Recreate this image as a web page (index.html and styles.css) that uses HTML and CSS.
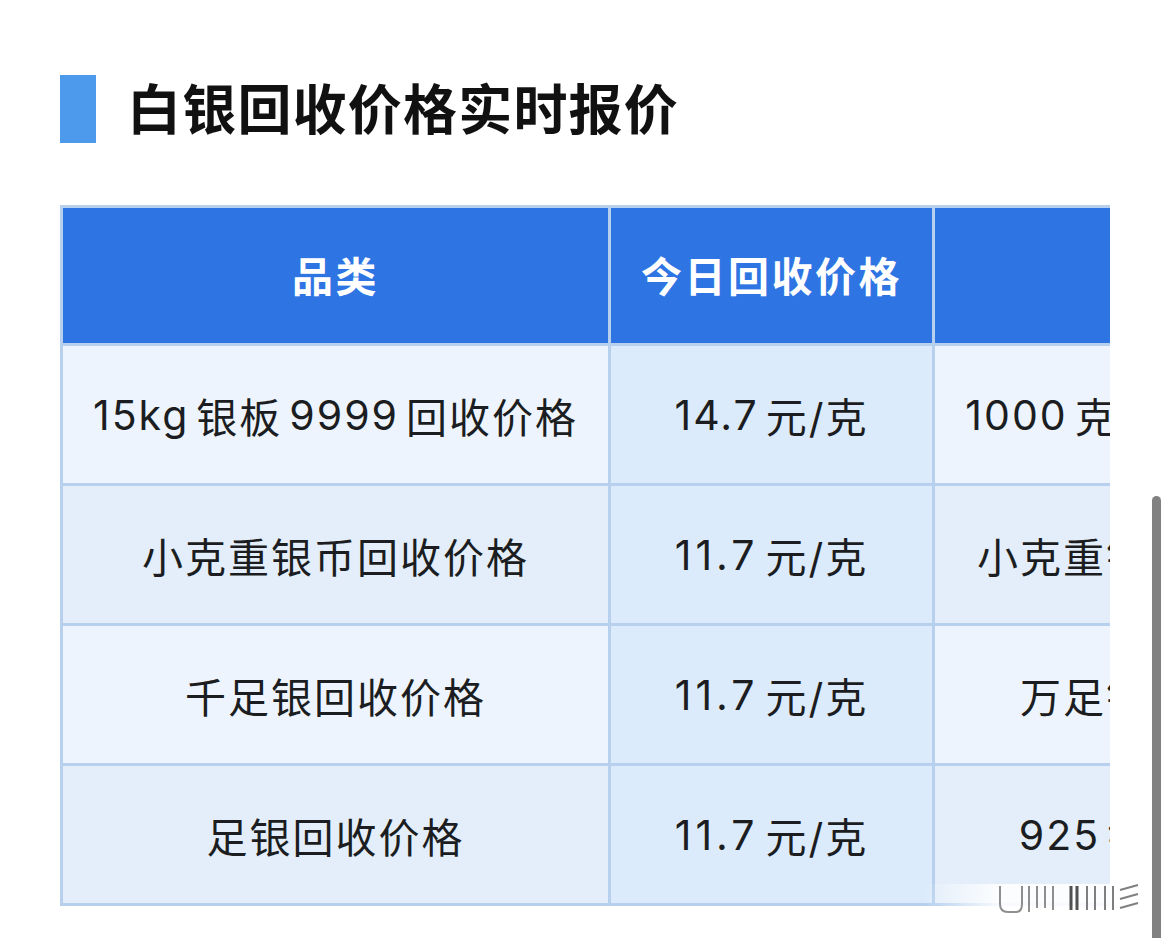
FILE: index.html
```html
<!DOCTYPE html>
<html lang="zh-CN">
<head>
<meta charset="utf-8">
<title>白银回收价格实时报价</title>
<link rel="stylesheet" href="styles.css">
</head>
<body>
<div class="page">
  <header class="heading">
    <span class="heading-bar"></span>
    <h1 class="heading-text">白银回收价格实时报价</h1>
  </header>
  <div class="table-wrap">
    <div class="grid">
      <div class="cell head">品类</div>
      <div class="cell head">今日回收价格</div>
      <div class="cell head"></div>

      <div class="cell odd">15kg<span class="gap"></span>银板<span class="gap"></span>9999<span class="gap"></span>回收价格</div>
      <div class="cell odd price">14.7<span class="gap"></span>元/克</div>
      <div class="cell odd">1000<span class="gap"></span>克银条回收价格</div>

      <div class="cell even">小克重银币回收价格</div>
      <div class="cell even price"><span class="num">11.7</span><span class="gap"></span>元/克</div>
      <div class="cell even">小克重银条回收价格</div>

      <div class="cell odd">千足银回收价格</div>
      <div class="cell odd price"><span class="num">11.7</span><span class="gap"></span>元/克</div>
      <div class="cell odd">万足银回收价格</div>

      <div class="cell even">足银回收价格</div>
      <div class="cell even price"><span class="num">11.7</span><span class="gap"></span>元/克</div>
      <div class="cell even">925<span class="gap"></span>银回收价格</div>
    </div>
  </div>
</div>
<div class="watermark">
  <svg width="230" height="40" viewBox="0 0 230 40">
    <defs>
      <linearGradient id="fade" x1="0" x2="1" y1="0" y2="0">
        <stop offset="0" stop-color="#ffffff" stop-opacity="0"/>
        <stop offset="0.35" stop-color="#ffffff" stop-opacity="0.9"/>
        <stop offset="1" stop-color="#ffffff" stop-opacity="0.9"/>
      </linearGradient>
    </defs>
    <rect x="0" y="6" width="215" height="26" fill="url(#fade)"/>
    <g stroke="#6a6a6a" stroke-width="2" opacity="0.75">
      <path d="M75 8 v18 q0 8 8 8 h8 q6 0 6-8 v-18" fill="none"/>
      <line x1="104" y1="8" x2="104" y2="34"/>
      <line x1="112" y1="8" x2="112" y2="30"/>
      <line x1="120" y1="8" x2="120" y2="30"/>
      <line x1="128" y1="8" x2="128" y2="32"/>
    </g>
    <g stroke="#333" stroke-width="3" opacity="0.85">
      <line x1="146" y1="8" x2="146" y2="32"/>
      <line x1="152" y1="8" x2="152" y2="32"/>
    </g>
    <g stroke="#555" stroke-width="2" opacity="0.75">
      <line x1="162" y1="8" x2="162" y2="32"/>
      <line x1="170" y1="8" x2="170" y2="32"/>
      <line x1="180" y1="8" x2="180" y2="32"/>
      <line x1="188" y1="8" x2="188" y2="32"/>
      <path d="M195 12 l18-5 M195 21 l18-5 M195 30 l18-5" fill="none"/>
    </g>
  </svg>
</div>
<div class="scrollbar"></div>
</body>
</html>
```

FILE: styles.css
```css
html, body {
  margin: 0;
  padding: 0;
  background: #ffffff;
}

body {
  width: 1170px;
  height: 938px;
  overflow: hidden;
  position: relative;
  font-family: Inter, "Noto Sans CJK SC", "Noto Sans", sans-serif;
  color: #1b1d21;
}

.page {
  padding: 75px 0 0 60px;
}

.heading {
  display: flex;
  align-items: center;
  gap: 31px;
  height: 68px;
}

.heading-bar {
  width: 36px;
  height: 68px;
  background: #4d9aec;
  flex: none;
}

.heading-text {
  margin: 0;
  font-family: "Noto Sans CJK SC", sans-serif;
  font-size: 54px;
  font-weight: 700;
  color: #111111;
  letter-spacing: 1.2px;
  line-height: 1;
  position: relative;
  top: -2px;
}

.table-wrap {
  margin-top: 62px;
  width: 1050px;
  overflow: hidden;
}

.grid {
  display: grid;
  grid-template-columns: 548px 324px 474px;
  width: max-content;
  border-top: 3px solid #b6d0ee;
  border-left: 3px solid #b6d0ee;
}

.cell {
  box-sizing: border-box;
  height: 140px;
  padding-bottom: 0;
  border-right: 3px solid #b6d0ee;
  border-bottom: 3px solid #b6d0ee;
  display: flex;
  align-items: center;
  justify-content: center;
  font-size: 41px;
  letter-spacing: 2px;
  white-space: nowrap;
  overflow: hidden;
}

.cell.head {
  height: 138px;
  padding-bottom: 3px;
  background: #2e75e3;
  color: #ffffff;
  font-family: "Noto Sans CJK SC", sans-serif;
  font-weight: 700;
  font-size: 41px;
  letter-spacing: 2.5px;
}

.cell.odd {
  background: #edf4fd;
}

.cell.even {
  background: #e3eefa;
}

.cell.price {
  background: #dcebfc;
}

.num {
  letter-spacing: 4px;
}

.gap {
  display: inline-block;
  width: 7px;
}

.scrollbar {
  position: absolute;
  left: 1152px;
  top: 496px;
  width: 9px;
  height: 460px;
  background: #818181;
  border-radius: 5px 5px 0 0;
}

.watermark {
  position: absolute;
  left: 925px;
  top: 878px;
  width: 230px;
  height: 40px;
}
```
